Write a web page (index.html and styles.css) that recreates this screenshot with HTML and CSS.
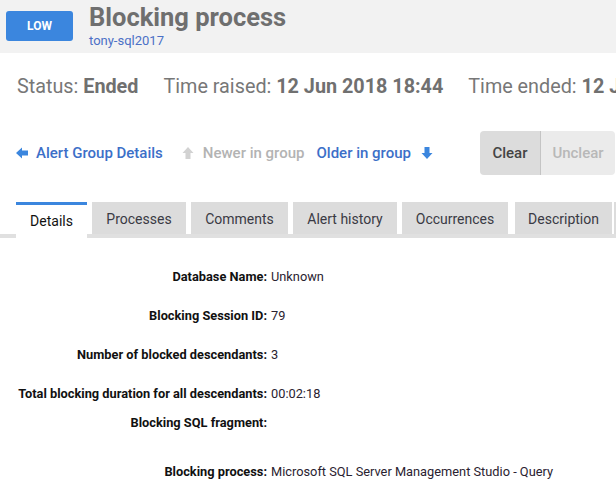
FILE: index.html
```html
<!DOCTYPE html>
<html>
<head>
<meta charset="utf-8">
<link rel="stylesheet" href="styles.css">
</head>
<body>
<div class="page">
  <header class="head">
    <div class="badge">LOW</div>
    <div class="titles">
      <h1 class="title">Blocking process</h1>
      <a class="sub">tony-sql2017</a>
    </div>
  </header>

  <div class="status">
    <span>Status: <b>Ended</b></span>
    <span>Time raised: <b>12 Jun 2018 18:44</b></span>
    <span>Time ended: <b>12 Jun 2018 18:46</b></span>
  </div>

  <div class="nav">
    <a class="link">
      <svg class="ico" viewBox="0 0 12 12"><path d="M0 6 L6 0.5 L6 3.5 L12 3.5 L12 8.5 L6 8.5 L6 11.5 Z"/></svg>
      <span class="txt">Alert Group Details</span>
    </a>
    <a class="link disabled">
      <svg class="ico" viewBox="0 0 12 12"><path d="M6 0 L11.5 6 L8.5 6 L8.5 12 L3.5 12 L3.5 6 L0.5 6 Z"/></svg>
      <span class="txt">Newer in group</span>
    </a>
    <a class="link older">
      <span class="txt">Older in group</span>
      <svg class="ico" viewBox="0 0 12 12"><path d="M6 12 L11.5 6 L8.5 6 L8.5 0 L3.5 0 L3.5 6 L0.5 6 Z"/></svg>
    </a>
    <div class="btns">
      <button class="btn clear">Clear</button>
      <button class="btn unclear">Unclear</button>
    </div>
  </div>

  <div class="tabs">
    <div class="tab active">Details</div>
    <div class="tab w-proc">Processes</div>
    <div class="tab w-comm">Comments</div>
    <div class="tab w-hist">Alert history</div>
    <div class="tab w-occ">Occurrences</div>
    <div class="tab w-desc">Description</div>
    <div class="tab w-more">More</div>
  </div>

  <div class="details">
    <div class="row"><div class="k">Database Name:</div><div class="v">Unknown</div></div>
    <div class="row"><div class="k">Blocking Session ID:</div><div class="v">79</div></div>
    <div class="row"><div class="k">Number of blocked descendants:</div><div class="v">3</div></div>
    <div class="row tight"><div class="k">Total blocking duration for all descendants:</div><div class="v">00:02:18</div></div>
    <div class="row frag"><div class="k">Blocking SQL fragment:</div><div class="v"></div></div>
    <div class="row"><div class="k">Blocking process:</div><div class="v">Microsoft SQL Server Management Studio - Query</div></div>
  </div>
</div>
</body>
</html>
```

FILE: styles.css
```css
html, body {
  margin: 0;
  padding: 0;
  background: #fff;
  overflow: hidden;
}
body {
  font-family: Roboto, "Liberation Sans", Arial, sans-serif;
  width: 616px;
  height: 484px;
}
.page {
  width: 616px;
  overflow: hidden;
}
.head {
  background: #f2f2f2;
  height: 53px;
  display: flex;
  align-items: flex-start;
  padding-left: 6px;
}
.badge {
  margin-top: 11px;
  width: 67px;
  height: 30px;
  background: #3b86de;
  border-radius: 3px;
  color: #fff;
  font-weight: 700;
  font-size: 12px;
  line-height: 30px;
  text-align: center;
}
.titles {
  margin-left: 16px;
  display: flex;
  flex-direction: column;
}
.title {
  margin: 2px 0 0 0;
  font-size: 25.5px;
  font-weight: 700;
  color: #6f6f6f;
  line-height: 30px;
}
.sub {
  font-size: 13px;
  color: #4b70c6;
  line-height: 16px;
  margin-top: 1px;
}
.status {
  display: flex;
  white-space: nowrap;
  padding: 23px 0 0 17px;
  gap: 25px;
  font-size: 19.8px;
  color: #777;
  line-height: 22px;
  height: 22px;
}
.status b {
  font-weight: 700;
  color: #707070;
}
.nav {
  display: flex;
  align-items: center;
  margin-top: 33px;
  padding-left: 16px;
  padding-right: 1px;
  height: 44px;
}
.link {
  display: flex;
  align-items: center;
  font-size: 15px;
  font-weight: 500;
  color: #3c6fc8;
  margin-right: 19px;
}
.link .ico {
  width: 12px;
  height: 12px;
  fill: #3b86de;
  margin-right: 8px;
}
.link.disabled {
  color: #b3b3b3;
  margin-right: 12px;
}
.link.disabled .ico {
  fill: #d2d2d2;
  margin-right: 9px;
}
.link.older .ico {
  margin-left: 10px;
  margin-right: 0;
}
.btns {
  margin-left: auto;
  display: flex;
  height: 44px;
}
.btn {
  border: none;
  font-family: inherit;
  font-size: 15px;
  font-weight: 500;
  height: 44px;
  padding: 0;
}
.clear {
  width: 61px;
  background: #dcdcdc;
  color: #444;
  border-radius: 4px 0 0 4px;
  border-right: 1px solid #c4c4c4;
}
.unclear {
  width: 74px;
  background: #ebebeb;
  color: #b8b8b8;
  border-radius: 0 4px 4px 0;
}
.tabs {
  display: flex;
  margin-top: 27px;
  padding-left: 16px;
  gap: 5px;
  border-bottom: 4px solid #e0e0e0;
  height: 32px;
  white-space: nowrap;
}
.tab {
  flex: none;
  height: 32px;
  background: #dcdcdc;
  font-size: 14px;
  color: #3a3a44;
  line-height: 34px;
  text-align: center;
}
.tab.active {
  width: 71px;
  background: #fff;
  border-top: 3px solid #3b86de;
  color: #111;
  margin-bottom: -4px;
  box-sizing: border-box;
  height: 36px;
  line-height: 33px;
}
.w-proc { width: 94px; }
.w-comm { width: 97px; }
.w-hist { width: 104px; }
.w-occ { width: 106px; margin-right: 2px; }
.w-desc { width: 97px; }
.w-more { width: 60px; margin-left: -3px; }
.details {
  padding-top: 31px;
  font-size: 12.8px;
  line-height: 16px;
  color: #222;
}
.row {
  display: grid;
  grid-template-columns: 267px 1fr;
  column-gap: 4px;
  margin-bottom: 23px;
}
.row.tight {
  margin-bottom: 13px;
}
.row.frag {
  margin-bottom: 33px;
}
.k {
  text-align: right;
  font-weight: 700;
  color: #111;
}
.v {
  color: #2a2230;
}
```
